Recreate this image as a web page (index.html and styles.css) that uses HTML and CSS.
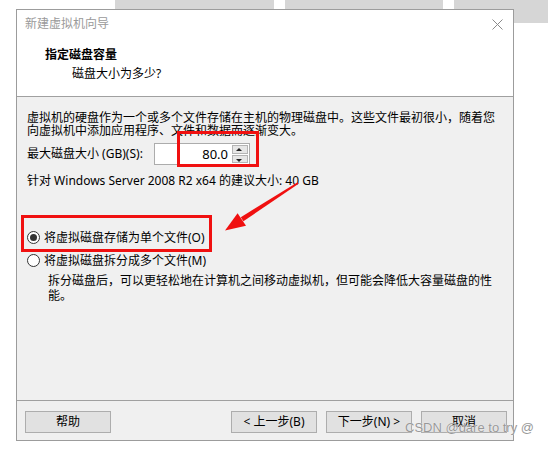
FILE: index.html
```html
<!DOCTYPE html>
<html lang="zh-CN">
<head>
    <meta charset="UTF-8">
    <title>新建虚拟机向导</title>
    <link rel="stylesheet" href="styles.css">
</head>
<body>
    <div class="desktop">
        <div class="bg-tab tab-a"></div>
        <div class="bg-tab tab-b"></div>
        <div class="bg-tab tab-c"></div>

        <div class="wizard">
            <div class="titlebar">
                <span class="caption">新建虚拟机向导</span>
                <svg class="close" width="11" height="11" viewBox="0 0 11 11">
                    <path d="M0.5 0.5 L10.5 10.5 M10.5 0.5 L0.5 10.5" stroke="#8a8a8a" stroke-width="1" fill="none"/>
                </svg>
            </div>

            <div class="header">
                <div class="h-title">指定磁盘容量</div>
                <div class="h-sub">磁盘大小为多少?</div>
            </div>

            <div class="content">
                <p class="intro">虚拟机的硬盘作为一个或多个文件存储在主机的物理磁盘中。这些文件最初很小，随着您<br>向虚拟机中添加应用程序、文件和数据而逐渐变大。</p>

                <div class="size-row">
                    <label class="size-label">最大磁盘大小 (GB)(S):</label>
                    <div class="spin">
                        <span class="spin-value">80.0</span>
                        <div class="spin-arrows">
                            <span class="arrow up"></span>
                            <span class="arrow down"></span>
                        </div>
                    </div>
                </div>

                <p class="hint">针对 Windows Server 2008 R2 x64 的建议大小: 40 GB</p>

                <div class="radio-row first">
                    <span class="radio checked"></span>
                    <span>将虚拟磁盘存储为单个文件(O)</span>
                </div>
                <div class="radio-row">
                    <span class="radio"></span>
                    <span>将虚拟磁盘拆分成多个文件(M)</span>
                </div>
                <p class="note">拆分磁盘后，可以更轻松地在计算机之间移动虚拟机，但可能会降低大容量磁盘的性<br>能。</p>
            </div>

            <div class="footer">
                <button class="btn">帮助</button>
                <div class="nav">
                    <button class="btn">&lt; 上一步(B)</button>
                    <button class="btn">下一步(N) &gt;</button>
                    <button class="btn">取消</button>
                </div>
            </div>
        </div>

        <!-- annotations drawn on top of the screenshot -->
        <div class="mark mark-size"></div>
        <div class="mark mark-radio"></div>
        <svg class="pointer" width="548" height="449" viewBox="0 0 548 449">
            <polygon points="297.6,182.2 298.6,183.8 243.4,221.2 240.8,217.2" fill="#f01010"/>
            <polygon points="225,230.5 237.6,213.2 246,225.8" fill="#f01010"/>
        </svg>
        <div class="watermark">CSDN @dare to try @</div>
    </div>
</body>
</html>
```

FILE: styles.css
```css
body {
    margin: 0;
    background: #fff;
    font-family: "Noto Sans", "Noto Sans CJK SC", sans-serif;
    font-size: 12px;
    color: #000;
}
.desktop {
    position: relative;
    width: 548px;
    height: 449px;
    overflow: hidden;
    padding-top: 9px;
    box-sizing: border-box;
}
.bg-tab {
    position: absolute;
    top: 0;
    height: 9px;
    background: #d6d6d6;
}
.tab-a {
    left: 115px;
    width: 159px;
}
.tab-b {
    left: 285px;
    width: 158px;
}
.tab-c {
    left: 454px;
    width: 94px;
    height: 23px;
}
.wizard {
    position: relative;
    z-index: 1;
    margin-left: 16px;
    width: 498px;
    box-sizing: border-box;
    border: 1px solid #9c9c9c;
    background: #fff;
}
.titlebar {
    height: 28px;
    display: flex;
    align-items: center;
    justify-content: space-between;
    padding: 0 10px 0 8px;
}
.caption {
    color: #9a9a9a;
    line-height: 16px;
}
.header {
    height: 49px;
    border-bottom: 1px solid #a0a0a0;
    padding: 9px 0 0 28px;
}
.h-title {
    font-weight: bold;
    line-height: 16px;
}
.h-sub {
    line-height: 16px;
    margin-top: 3px;
    padding-left: 27px;
}
.content {
    height: 303px;
    box-sizing: border-box;
    background: #f0f0f0;
    padding: 14px 0 0 10px;
}
.intro {
    margin: 0;
    line-height: 13px;
}
.size-row {
    display: flex;
    align-items: center;
    margin-top: 6px;
    height: 22px;
}
.size-label {
    width: 127px;
    line-height: 16px;
}
.spin {
    display: flex;
    width: 96px;
    height: 22px;
    box-sizing: border-box;
    border: 1px solid #acacac;
    background: #fff;
}
.spin-value {
    flex: 1;
    text-align: right;
    padding-right: 4px;
    line-height: 20px;
    font-size: 13px;
}
.spin-arrows {
    width: 16px;
    display: flex;
    flex-direction: column;
    gap: 1px;
    padding: 1px 1px 1px 0;
}
.arrow {
    flex: 1;
    position: relative;
    background: #e6e6e6;
    border: 1px solid #b4b4b4;
}
.arrow::after {
    content: "";
    position: absolute;
    left: 3px;
    border-left: 3px solid transparent;
    border-right: 3px solid transparent;
}
.arrow.up::after {
    top: 2px;
    border-bottom: 3px solid #222;
}
.arrow.down::after {
    top: 3px;
    border-top: 3px solid #222;
}
.hint {
    margin: 9px 0 0;
    line-height: 14px;
}
.radio-row {
    display: flex;
    align-items: center;
    gap: 4px;
    height: 16px;
    margin-top: 7px;
}
.radio-row.first {
    margin-top: 41px;
}
.radio {
    width: 13px;
    height: 13px;
    box-sizing: border-box;
    border: 1px solid #333;
    border-radius: 50%;
    background: #fff;
    display: flex;
    align-items: center;
    justify-content: center;
}
.radio.checked::after {
    content: "";
    width: 7px;
    height: 7px;
    border-radius: 50%;
    background: #333;
}
.note {
    margin: 5px 0 0;
    padding-left: 21px;
    line-height: 15px;
}
.footer {
    height: 40px;
    border-top: 1px solid #a0a0a0;
    background: #f0f0f0;
    display: flex;
    justify-content: space-between;
    padding: 10px 6px 0 8px;
    box-sizing: border-box;
}
.nav {
    display: flex;
    gap: 9px;
}
.btn {
    width: 86px;
    height: 22px;
    background: #e1e1e1;
    border: 1px solid #adadad;
    font-family: "Noto Sans", "Noto Sans CJK SC", sans-serif;
    font-size: 12px;
    color: #000;
    padding: 0;
    line-height: 18px;
}
.mark {
    position: absolute;
    z-index: 2;
    border: 3px solid #f01010;
    box-sizing: border-box;
}
.mark-size {
    left: 177px;
    top: 131px;
    width: 82px;
    height: 36px;
}
.mark-radio {
    left: 21px;
    top: 215px;
    width: 191px;
    height: 37px;
}
.pointer {
    position: absolute;
    z-index: 2;
    left: 0;
    top: 0;
}
.watermark {
    position: absolute;
    z-index: 3;
    left: 405px;
    top: 420px;
    font-family: "Liberation Sans", Arial, sans-serif;
    font-size: 13px;
    line-height: 16px;
    color: #989898;
    text-shadow: 0 0 1px #fff;
}
```
